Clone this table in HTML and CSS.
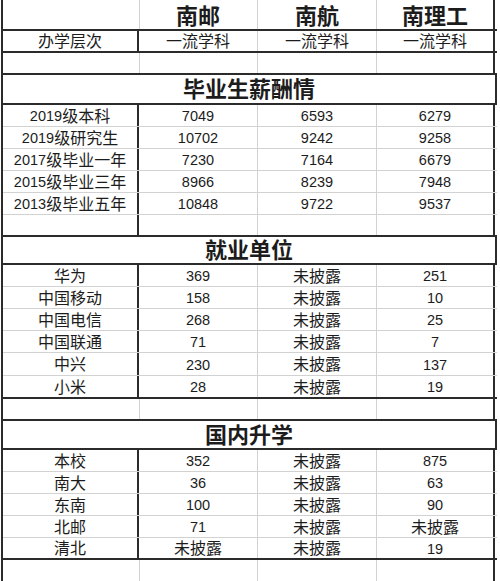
FILE: index.html
```html
<!DOCTYPE html>
<html lang="zh-CN">
<head>
<meta charset="utf-8">
<title>南邮 南航 南理工 对比</title>
<link rel="stylesheet" href="styles.css">
</head>
<body>
<div class="sheet">
  <div class="row h31 bd">
    <div class="c gr"></div>
    <div class="c head">南邮</div>
    <div class="c head">南航</div>
    <div class="c head last">南理工</div>
  </div>
  <div class="row h22 bd">
    <div class="c dk">办学层次</div>
    <div class="c">一流学科</div>
    <div class="c">一流学科</div>
    <div class="c last">一流学科</div>
  </div>
  <div class="row h22 bd">
    <div class="c gr"></div>
    <div class="c"></div>
    <div class="c"></div>
    <div class="c last"></div>
  </div>
  <div class="row sec h30 bd"><div class="c title">毕业生薪酬情</div></div>

  <div class="row h22"><div class="c dk"><span class="n">2019</span>级本科</div><div class="c n">7049</div><div class="c n">6593</div><div class="c n last">6279</div></div>
  <div class="row h22"><div class="c dk"><span class="n">2019</span>级研究生</div><div class="c n">10702</div><div class="c n">9242</div><div class="c n last">9258</div></div>
  <div class="row h22"><div class="c dk"><span class="n">2017</span>级毕业一年</div><div class="c n">7230</div><div class="c n">7164</div><div class="c n last">6679</div></div>
  <div class="row h22"><div class="c dk"><span class="n">2015</span>级毕业三年</div><div class="c n">8966</div><div class="c n">8239</div><div class="c n last">7948</div></div>
  <div class="row h22"><div class="c dk"><span class="n">2013</span>级毕业五年</div><div class="c n">10848</div><div class="c n">9722</div><div class="c n last">9537</div></div>
  <div class="row h22 bd">
    <div class="c dk"></div>
    <div class="c"></div>
    <div class="c"></div>
    <div class="c last"></div>
  </div>
  <div class="row sec h28 bd"><div class="c title">就业单位</div></div>

  <div class="row h22"><div class="c dk">华为</div><div class="c n">369</div><div class="c">未披露</div><div class="c n last">251</div></div>
  <div class="row h22"><div class="c dk">中国移动</div><div class="c n">158</div><div class="c">未披露</div><div class="c n last">10</div></div>
  <div class="row h22"><div class="c dk">中国电信</div><div class="c n">268</div><div class="c">未披露</div><div class="c n last">25</div></div>
  <div class="row h22"><div class="c dk">中国联通</div><div class="c n">71</div><div class="c">未披露</div><div class="c n last">7</div></div>
  <div class="row h23"><div class="c dk">中兴</div><div class="c n">230</div><div class="c">未披露</div><div class="c n last">137</div></div>
  <div class="row h23 bd"><div class="c dk">小米</div><div class="c n">28</div><div class="c">未披露</div><div class="c n last">19</div></div>
  <div class="row h22 bd">
    <div class="c gr"></div>
    <div class="c"></div>
    <div class="c"></div>
    <div class="c last"></div>
  </div>
  <div class="row sec h29 bd"><div class="c title">国内升学</div></div>

  <div class="row h22"><div class="c dk">本校</div><div class="c n">352</div><div class="c">未披露</div><div class="c n last">875</div></div>
  <div class="row h22"><div class="c dk">南大</div><div class="c n">36</div><div class="c">未披露</div><div class="c n last">63</div></div>
  <div class="row h22"><div class="c dk">东南</div><div class="c n">100</div><div class="c">未披露</div><div class="c n last">90</div></div>
  <div class="row h22"><div class="c dk">北邮</div><div class="c n">71</div><div class="c">未披露</div><div class="c last">未披露</div></div>
  <div class="row h22 bd"><div class="c dk">清北</div><div class="c">未披露</div><div class="c">未披露</div><div class="c n last">19</div></div>
  <div class="row h22">
    <div class="c gr"></div>
    <div class="c"></div>
    <div class="c"></div>
    <div class="c last"></div>
  </div>
</div>
</body>
</html>
```
FILE: styles.css
```css
html, body {
  margin: 0;
  padding: 0;
  background: #fff;
}

body {
  width: 500px;
  height: 581px;
  overflow: hidden;
  font-family: "Liberation Sans", "Noto Sans CJK SC", sans-serif;
  color: #1c1c1c;
}

.sheet {
  margin-left: 1px;
  width: 494px;
  border-left: 2px solid #2b2b2b;
}

.row {
  display: grid;
  grid-template-columns: 136px 119px 119px 118px;
  box-sizing: border-box;
  border-bottom: 1px solid #d2d2d2;
}

.row.bd {
  border-bottom: 2px solid #2b2b2b;
}

.row.sec {
  grid-template-columns: 1fr;
}

.h22 { height: 22px; }
.h23 { height: 23px; }
.h28 { height: 28px; }
.h29 { height: 29px; }
.h30 { height: 30px; }
.h31 { height: 31px; }

.c {
  box-sizing: border-box;
  border-right: 1px solid #d2d2d2;
  display: flex;
  align-items: center;
  justify-content: center;
  font-size: 16px;
  line-height: 1;
  padding-top: 2px;
  white-space: nowrap;
}

.c.dk {
  border-right: 2px solid #2b2b2b;
}

.c.gr {
  border-right: 1px solid #d2d2d2;
  width: 137px;
  margin-right: -1px;
}

.c.last,
.row.sec .c {
  border-right: 2px solid #2b2b2b;
}

.n {
  font-size: 14.5px;
}

.head {
  font-size: 22px;
  font-weight: 700;
  padding-top: 4px;
}

.title {
  font-size: 22px;
  font-weight: 700;
  letter-spacing: 0;
}
```
